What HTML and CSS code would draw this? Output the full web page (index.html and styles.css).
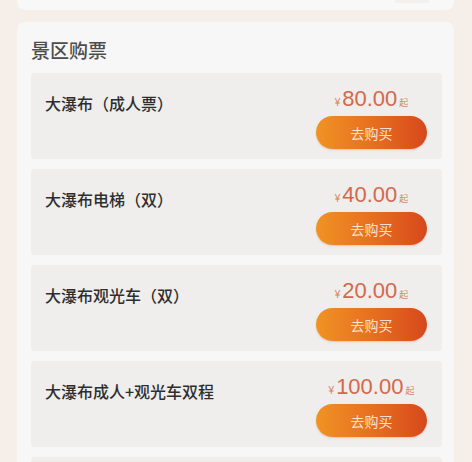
FILE: index.html
```html
<!DOCTYPE html>
<html lang="zh-CN">
<head>
<meta charset="utf-8">
<title>景区购票</title>
<link rel="stylesheet" href="styles.css">
</head>
<body>
<div class="page">
  <div class="top-card"><span class="top-chip"></span></div>
  <section class="section">
    <h2 class="section-title">景区购票</h2>
    <div class="list">
      <div class="card">
        <div class="name">大瀑布（成人票）</div>
        <div class="buy">
          <div class="price"><span class="yen">¥</span><span class="amount">80.00</span><span class="qi">起</span></div>
          <button class="btn">去购买</button>
        </div>
      </div>
      <div class="card">
        <div class="name">大瀑布电梯（双）</div>
        <div class="buy">
          <div class="price"><span class="yen">¥</span><span class="amount">40.00</span><span class="qi">起</span></div>
          <button class="btn">去购买</button>
        </div>
      </div>
      <div class="card">
        <div class="name">大瀑布观光车（双）</div>
        <div class="buy">
          <div class="price"><span class="yen">¥</span><span class="amount">20.00</span><span class="qi">起</span></div>
          <button class="btn">去购买</button>
        </div>
      </div>
      <div class="card">
        <div class="name">大瀑布成人+观光车双程</div>
        <div class="buy">
          <div class="price"><span class="yen">¥</span><span class="amount">100.00</span><span class="qi">起</span></div>
          <button class="btn">去购买</button>
        </div>
      </div>
      <div class="card card-stub"></div>
    </div>
  </section>
</div>
</body>
</html>
```

FILE: styles.css
```css
html, body {
  margin: 0;
  padding: 0;
  background: #f6efe9;
  font-family: "Liberation Sans", "Noto Sans CJK SC", sans-serif;
  overflow: hidden;
}

.page {
  padding: 0 18px 0 17px;
  display: flex;
  flex-direction: column;
  gap: 12px;
}

.top-card {
  height: 10px;
  background: #f8f8f8;
  border-radius: 0 0 8px 8px;
  display: flex;
  justify-content: flex-end;
  padding-right: 24px;
}

.top-chip {
  width: 36px;
  height: 3px;
  background: #f2f1f0;
  border-radius: 0 0 3px 3px;
}

.section {
  background: #f7f7f7;
  border-radius: 8px;
  padding: 15px 12px 0 14px;
}

.section-title {
  margin: 0 0 10px 0;
  font-family: "Noto Sans CJK SC", sans-serif;
  font-size: 19px;
  line-height: 26px;
  font-weight: 500;
  color: #4d4d4d;
}

.list {
  display: flex;
  flex-direction: column;
  gap: 10px;
}

.card {
  height: 86px;
  box-sizing: border-box;
  background: #efeeed;
  border-radius: 4px;
  padding: 13px 15px 10px 14px;
  display: flex;
  justify-content: space-between;
  align-items: flex-start;
}

.name {
  padding-top: 5px;
  font-family: "Noto Sans CJK SC", sans-serif;
  font-size: 16px;
  line-height: 24px;
  font-weight: 500;
  color: #2e2e2e;
}

.buy {
  width: 111px;
  display: flex;
  flex-direction: column;
  align-items: center;
  gap: 4px;
}

.price {
  height: 26px;
  line-height: 26px;
  white-space: nowrap;
  color: #d4684a;
}

.yen {
  font-size: 10px;
  color: #dc7f62;
  margin-right: 2px;
}

.amount {
  font-size: 22px;
}

.qi {
  font-family: "Noto Sans CJK SC", sans-serif;
  font-size: 9px;
  color: #dc7f62;
  margin-left: 2px;
}

.btn {
  width: 111px;
  height: 33px;
  border: none;
  border-radius: 17px;
  background: linear-gradient(90deg, #f09324 0%, #e66c1f 55%, #d6481d 100%);
  color: #fbe0cd;
  font-family: "Noto Sans CJK SC", sans-serif;
  font-size: 14px;
  padding: 0;
  box-shadow: 0 1px 2px rgba(200, 90, 30, 0.25);
}
```
